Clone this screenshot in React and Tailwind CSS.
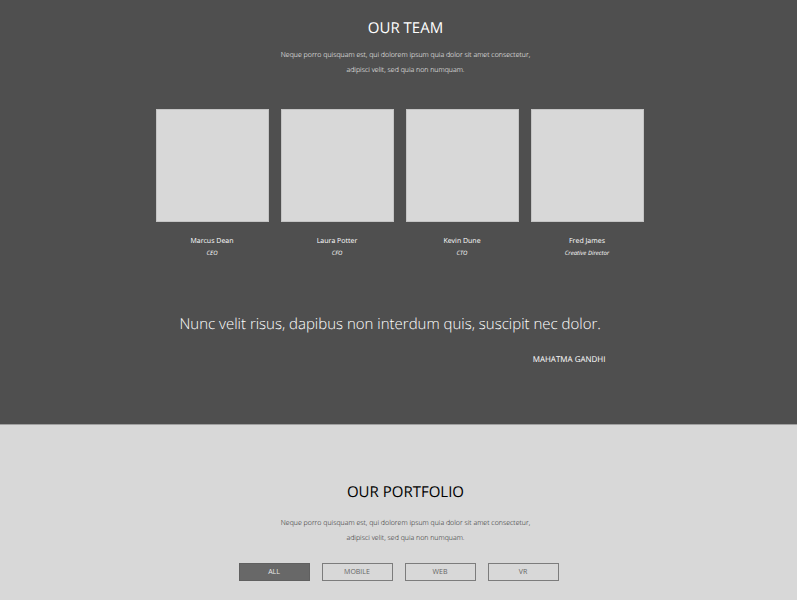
const team = [
  { name: "Marcus Dean", role: "CEO" },
  { name: "Laura Potter", role: "CFO" },
  { name: "Kevin Dune", role: "CTO" },
  { name: "Fred James", role: "Creative Director" },
];

const filters = ["ALL", "MOBILE", "WEB", "VR"];

function Intro({ title, titleClass, textClass }) {
  return (
    <div className="pl-3.5 text-center">
      <h2 className={`text-[15px] leading-6 ${titleClass}`}>{title}</h2>
      <p className={`text-[7px] leading-[15px] font-light ${textClass}`}>
        Neque porro quisquam est, qui dolorem ipsum quia dolor sit amet consectetur,
        <br />
        adipisci velit, sed quia non numquam.
      </p>
    </div>
  );
}

export default function App() {
  return (
    <main className="font-['Open_Sans','Noto_Sans',sans-serif] [text-rendering:geometricPrecision]">
      <section className="bg-[#4f4f4f] pt-4 pb-[58px] text-white">
        <Intro title="OUR TEAM" titleClass="mb-2" textClass="text-white" />
        <ul className="mt-[31px] flex justify-center gap-3 pl-[2px]">
          {team.map((member) => (
            <li key={member.name} className="w-[113px] text-center">
              <div className="aspect-square border border-[#c4c4c4] bg-[#d8d8d8]" />
              <h3 className="mt-3.5 text-[7px] leading-[12px]">{member.name}</h3>
              <p className="text-[6px] leading-[11px] italic">{member.role}</p>
            </li>
          ))}
        </ul>
        <div className="mt-[53px] flex justify-center pr-3">
          <figure className="w-[426px]">
            <blockquote className="text-[15px] leading-6 font-light whitespace-nowrap">
              Nunc velit risus, dapibus non interdum quis, suscipit nec dolor.
            </blockquote>
            <figcaption className="mt-[18px] text-right text-[8px] leading-3">MAHATMA GANDHI</figcaption>
          </figure>
        </div>
      </section>
      <section className="min-h-44 border-t border-[#a0a0a0] bg-[#d8d8d8] pt-[55px] pb-5">
        <Intro title="OUR PORTFOLIO" titleClass="mb-3" textClass="text-[#222222]" />
        <div className="mt-[17px] flex justify-center gap-3">
          {filters.map((label, i) => (
            <button
              key={label}
              type="button"
              className={`h-[18px] w-[71px] border text-[7px] leading-4 ${
                i === 0
                  ? "border-[#606060] bg-[#686868] text-[#e8e8e8]"
                  : "border-[#7c7c7c] bg-transparent text-[#666666]"
              }`}
            >
              {label}
            </button>
          ))}
        </div>
      </section>
    </main>
  );
}
